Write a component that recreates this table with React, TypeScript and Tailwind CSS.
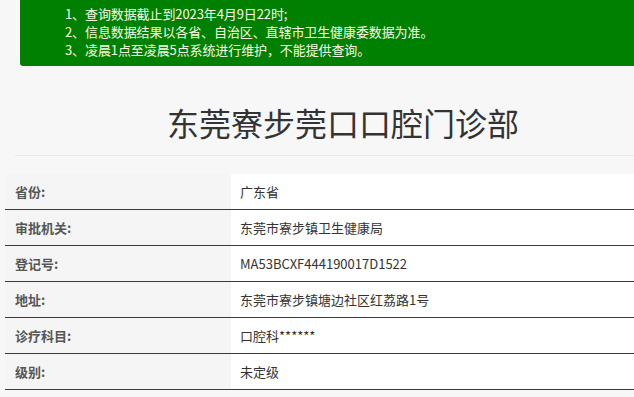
const notices = [
  "1、查询数据截止到2023年4月9日22时;",
  "2、信息数据结果以各省、自治区、直辖市卫生健康委数据为准。",
  "3、凌晨1点至凌晨5点系统进行维护，不能提供查询。",
];

const rows = [
  { label: "省份:", value: "广东省" },
  { label: "审批机关:", value: "东莞市寮步镇卫生健康局" },
  { label: "登记号:", value: "MA53BCXF444190017D1522" },
  { label: "地址:", value: "东莞市寮步镇塘边社区红荔路1号" },
  { label: "诊疗科目:", value: "口腔科******" },
  { label: "级别:", value: "未定级" },
];

const font = {
  fontFamily: '"Microsoft YaHei", "Noto Sans CJK SC", "Noto Sans", sans-serif',
};

export default function App() {
  return (
    <div
      className="w-full min-h-screen overflow-hidden bg-[#f7f7f7]"
      style={font}
    >
      {/* Notice banner */}
      <div className="ml-[20px] w-[700px] bg-[#008000] rounded-bl-[3px] pt-[5px] pb-[7px] pl-[45px]">
        {notices.map((line) => (
          <p
            key={line}
            className="text-[13px] leading-[18px] text-[#fbfbe6] tracking-[-0.1px]"
          >
            {line}
          </p>
        ))}
      </div>

      {/* Title */}
      <h1 className="w-[686px] mt-[36px] text-center text-[32px] leading-[40px] text-[#333] font-normal">
        东莞寮步莞口口腔门诊部
      </h1>

      <div className="ml-[15px] w-[700px] mt-[13px] h-px bg-[#e8e8e8]" />

      {/* Detail table */}
      <div className="ml-[5px] w-[700px] mt-[18px]">
        {rows.map((row) => (
          <div
            key={row.label}
            className="flex h-[36px] border-b border-[#1d4d3a]"
          >
            <div className="w-[226px] flex items-center pl-[10px] bg-[#f5f5f5] text-[13px] font-bold text-[#555]">
              {row.label}
            </div>
            <div className="flex-1 flex items-center pl-[9px] bg-white text-[13px] text-[#333]">
              {row.value}
            </div>
          </div>
        ))}
      </div>
    </div>
  );
}
